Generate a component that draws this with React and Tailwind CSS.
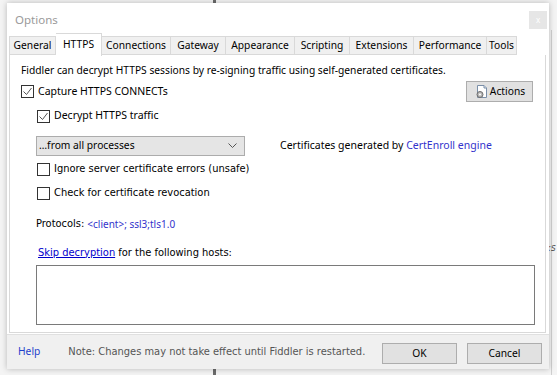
import React from "react";

const seg = { fontFamily: '"Noto Sans", "Open Sans", sans-serif' };
const tah = { fontFamily: '"DejaVu Sans Condensed", "DejaVu Sans", sans-serif' };

function Check({ checked }) {
  return (
    <span className="w-[13px] h-[13px] border border-[#333333] bg-white flex items-center justify-center shrink-0">
      {checked && (
        <svg width="11" height="11" viewBox="0 0 11 11">
          <path d="M1.5 5.5 L4.5 8.5 L9.5 2" fill="none" stroke="#555" strokeWidth="1" />
        </svg>
      )}
    </span>
  );
}

const tabs = [
  ["General", 47],
  ["HTTPS", 46],
  ["Connections", 69],
  ["Gateway", 55],
  ["Appearance", 69],
  ["Scripting", 55],
  ["Extensions", 64],
  ["Performance", 73],
  ["Tools", 30],
];

export default function App() {
  return (
    <div className="w-[557px] h-[375px] bg-[#f4f4f4] relative overflow-hidden">
      <div className="absolute left-[213px] top-0 w-[3px] h-[375px] bg-[#6b6b6b]" />
      <div className="absolute left-[551px] top-[30px] w-[1px] h-[345px] bg-[#d0d0d0]" />
      <div className="absolute left-[548px] top-[240px] text-[10px] italic text-[#555]" style={tah}>:s</div>
      <div className="relative pt-[3px] pl-[7px]">
        <div className="w-[542px] h-[366px] bg-white shadow-[0_0_6px_rgba(0,0,0,0.25)] flex flex-col" style={seg}>
          <div className="h-[30px] flex items-start justify-between">
            <span className="mt-[8px] ml-[8px] text-[11.5px] text-[#9a9a9a]">Options</span>
            <span className="mt-[8px] mr-[2px] w-[18px] h-[18px] bg-[#e6e6e6] flex items-center justify-center text-[8px] leading-none text-white">x</span>
          </div>
          <div className="flex items-end h-[22px] pl-[2px]">
            {tabs.map(([t, w], i) =>
              t === "HTTPS" ? (
                <div key={t} style={{ width: w }} className="h-[23px] -mb-[1px] bg-white border-t border-r border-[#d9d9d9] flex items-center justify-center text-[10.25px] text-black z-10">{t}</div>
              ) : (
                <div key={t} style={{ width: w }} className={"h-[19px] bg-[#f0f0f0] border-t border-r border-b border-[#d9d9d9] flex items-center justify-center text-[10.25px] text-black" + (i === 0 ? " border-l" : "")}>{t}</div>
              )
            )}
          </div>
          <div className="ml-[2px] w-[537px] h-[278px] border border-t-0 border-[#d9d9d9] bg-white flex flex-col text-[10.25px] text-black">
            <div className="h-[16px] mt-[8px] pl-[11px] flex items-center">Fiddler can decrypt HTTPS sessions by re-signing traffic using self-generated certificates.</div>
            <div className="h-[21px] mt-[2px] flex items-center">
              <div className="pl-[11px] flex items-center gap-[4px] text-[10.5px]">
                <Check checked />
                <span>Capture HTTPS CONNECTs</span>
              </div>
              <div className="ml-auto mr-[12px] w-[67px] h-[21px] bg-[#e1e1e1] border border-[#adadad] flex items-center justify-center gap-[1px]">
                <svg width="15" height="15" viewBox="0 0 15 15">
                  <path d="M3.5 1.5 H10 L12.5 4 V13.5 H3.5 Z" fill="#fff" stroke="#7a8fa8" />
                  <path d="M10 1.5 V4 H12.5" fill="#dde6f0" stroke="#7a8fa8" />
                  <circle cx="6" cy="10.5" r="3" fill="#b8b8b8" stroke="#6d6d6d" />
                  <circle cx="6" cy="10.5" r="1" fill="#fff" />
                </svg>
                <span>Actions</span>
              </div>
            </div>
            <div className="h-[16px] mt-[6px] pl-[27px] flex items-center gap-[4px] text-[10.5px]">
              <Check checked />
              <span>Decrypt HTTPS traffic</span>
            </div>
            <div className="h-[20px] mt-[12px] flex items-center">
              <div className="ml-[26px] w-[209px] h-[20px] bg-[#e5e5e5] border border-[#acacac] flex items-center justify-between pl-[2px] pr-[7px]">
                <span>…from all processes</span>
                <svg width="9" height="6" viewBox="0 0 9 6"><path d="M0.5 0.5 L4.5 4.5 L8.5 0.5" fill="none" stroke="#555" /></svg>
              </div>
              <span className="ml-[35px] text-[10.5px]">Certificates generated by <span className="text-[#3333cc]">CertEnroll engine</span></span>
            </div>
            <div className="h-[16px] mt-[5px] pl-[27px] flex items-center gap-[4px] text-[11px]" style={tah}>
              <Check />
              <span>Ignore server certificate errors (unsafe)</span>
            </div>
            <div className="h-[16px] mt-[8px] pl-[27px] flex items-center gap-[4px] text-[11px]" style={tah}>
              <Check />
              <span>Check for certificate revocation</span>
            </div>
            <div className="h-[16px] mt-[15px] pl-[26px] flex items-center text-[11px]" style={tah}>
              <span>Protocols:</span>
              <span className="ml-[3px] text-[#3333cc] text-[10px]" style={seg}>&lt;client&gt;; ssl3;tls1.0</span>
            </div>
            <div className="h-[16px] mt-[13px] pl-[28px] flex items-center text-[11px]" style={tah}>
              <span><span className="text-[#0000cc] underline">Skip decryption</span> for the following hosts:</span>
            </div>
            <div className="mt-[4px] ml-[26px] w-[499px] h-[60px] border border-[#7a7a7a] bg-white" />
          </div>
          <div className="mt-[1px] flex-1 bg-[#f0f0f0] border-t border-[#e0e0e0] flex items-center">
            <span className="ml-[11px] text-[10.25px] text-[#1f3fcc]">Help</span>
            <span className="ml-[28px] text-[11px] text-[#555]" style={tah}>Note: Changes may not take effect until Fiddler is restarted.</span>
            <div className="ml-auto mt-[3px] flex gap-[10px] mr-[7px]">
              <div className="w-[75px] h-[21px] bg-[#e1e1e1] border border-[#adadad] flex items-center justify-center text-[10.25px]">OK</div>
              <div className="w-[75px] h-[21px] bg-[#e1e1e1] border border-[#adadad] flex items-center justify-center text-[10.25px]">Cancel</div>
            </div>
          </div>
        </div>
      </div>
    </div>
  );
}
